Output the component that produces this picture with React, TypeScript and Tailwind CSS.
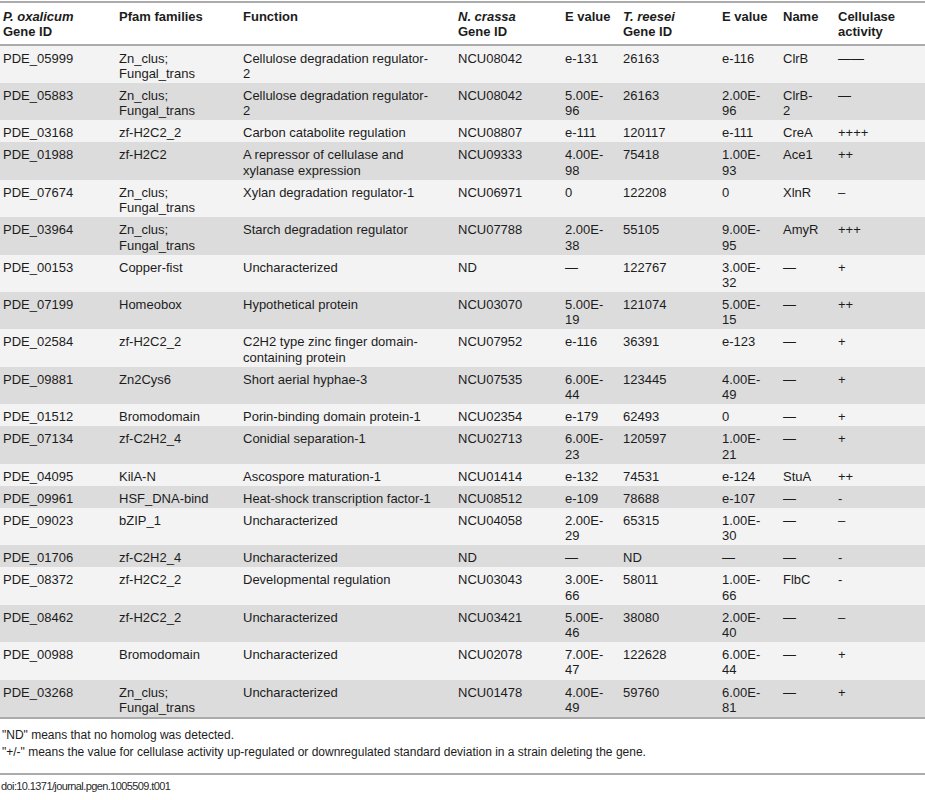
type Row = string[];

const rows: Row[] = [
  ['PDE_05999', 'Zn_clus;\nFungal_trans', 'Cellulose degradation regulator-\n2', 'NCU08042', 'e-131', '26163', 'e-116', 'ClrB', '——'],
  ['PDE_05883', 'Zn_clus;\nFungal_trans', 'Cellulose degradation regulator-\n2', 'NCU08042', '5.00E-\n96', '26163', '2.00E-\n96', 'ClrB-\n2', '—'],
  ['PDE_03168', 'zf-H2C2_2', 'Carbon catabolite regulation', 'NCU08807', 'e-111', '120117', 'e-111', 'CreA', '++++'],
  ['PDE_01988', 'zf-H2C2', 'A repressor of cellulase and\nxylanase expression', 'NCU09333', '4.00E-\n98', '75418', '1.00E-\n93', 'Ace1', '++'],
  ['PDE_07674', 'Zn_clus;\nFungal_trans', 'Xylan degradation regulator-1', 'NCU06971', '0', '122208', '0', 'XlnR', '–'],
  ['PDE_03964', 'Zn_clus;\nFungal_trans', 'Starch degradation regulator', 'NCU07788', '2.00E-\n38', '55105', '9.00E-\n95', 'AmyR', '+++'],
  ['PDE_00153', 'Copper-fist', 'Uncharacterized', 'ND', '—', '122767', '3.00E-\n32', '—', '+'],
  ['PDE_07199', 'Homeobox', 'Hypothetical protein', 'NCU03070', '5.00E-\n19', '121074', '5.00E-\n15', '—', '++'],
  ['PDE_02584', 'zf-H2C2_2', 'C2H2 type zinc finger domain-\ncontaining protein', 'NCU07952', 'e-116', '36391', 'e-123', '—', '+'],
  ['PDE_09881', 'Zn2Cys6', 'Short aerial hyphae-3', 'NCU07535', '6.00E-\n44', '123445', '4.00E-\n49', '—', '+'],
  ['PDE_01512', 'Bromodomain', 'Porin-binding domain protein-1', 'NCU02354', 'e-179', '62493', '0', '—', '+'],
  ['PDE_07134', 'zf-C2H2_4', 'Conidial separation-1', 'NCU02713', '6.00E-\n23', '120597', '1.00E-\n21', '—', '+'],
  ['PDE_04095', 'KilA-N', 'Ascospore maturation-1', 'NCU01414', 'e-132', '74531', 'e-124', 'StuA', '++'],
  ['PDE_09961', 'HSF_DNA-bind', 'Heat-shock transcription factor-1', 'NCU08512', 'e-109', '78688', 'e-107', '—', '-'],
  ['PDE_09023', 'bZIP_1', 'Uncharacterized', 'NCU04058', '2.00E-\n29', '65315', '1.00E-\n30', '—', '–'],
  ['PDE_01706', 'zf-C2H2_4', 'Uncharacterized', 'ND', '—', 'ND', '—', '—', '-'],
  ['PDE_08372', 'zf-H2C2_2', 'Developmental regulation', 'NCU03043', '3.00E-\n66', '58011', '1.00E-\n66', 'FlbC', '-'],
  ['PDE_08462', 'zf-H2C2_2', 'Uncharacterized', 'NCU03421', '5.00E-\n46', '38080', '2.00E-\n40', '—', '–'],
  ['PDE_00988', 'Bromodomain', 'Uncharacterized', 'NCU02078', '7.00E-\n47', '122628', '6.00E-\n44', '—', '+'],
  ['PDE_03268', 'Zn_clus;\nFungal_trans', 'Uncharacterized', 'NCU01478', '4.00E-\n49', '59760', '6.00E-\n81', '—', '+'],
];

const widths = ['w-[116px]', 'w-[124px]', 'w-[215px]', 'w-[107px]', 'w-[58px]', 'w-[99px]', 'w-[61px]', 'w-[55px]', 'w-[90px]'];

const Species = ({ name }: { name: string }) => (
  <>
    <i>{name}</i>
    <br />
    Gene ID
  </>
);

const headers = [
  <Species name="P. oxalicum" />,
  'Pfam families',
  'Function',
  <Species name="N. crassa" />,
  'E value',
  <Species name="T. reesei" />,
  'E value',
  'Name',
  <>Cellulase<br />activity</>,
];

export default function App() {
  return (
    <div className="w-[925px] bg-white pt-[1px] text-[#1c1c1c] font-['Liberation_Sans',Arial,sans-serif]">
      <table className="w-full table-fixed border-collapse text-[13px] leading-[15.3px]">
        <colgroup>
          {widths.map((w, i) => (
            <col key={i} className={w} />
          ))}
        </colgroup>
        <thead>
          <tr className="border-t-2 border-b-2 border-[#ababab]">
            {headers.map((h, i) => (
              <th key={i} className="text-left align-top font-bold pl-[3px] pt-[6px] pb-[4px] whitespace-pre">
                {h}
              </th>
            ))}
          </tr>
        </thead>
        <tbody className="border-b-2 border-[#ababab]">
          {rows.map((r, ri) => (
            <tr key={ri} className={ri % 2 === 0 ? 'bg-[#f3f3f3]' : 'bg-[#dcdcdc]'}>
              {r.map((c, ci) => (
                <td key={ci} className="align-top pl-[3px] pt-[5px] pb-[1.8px] whitespace-pre">
                  {c}
                </td>
              ))}
            </tr>
          ))}
        </tbody>
      </table>

      <div className="pt-[8px] pb-[13px] pl-[2px] text-[12px] leading-[16.6px]">
        <p>"ND" means that no homolog was detected.</p>
        <p>"+/-" means the value for cellulase activity up-regulated or downregulated standard deviation in a strain deleting the gene.</p>
      </div>
      <div className="border-t-2 border-[#ababab] pt-[3px] pl-[1px] text-[11px] tracking-[-0.6px] leading-[16px] text-[#2a2a2a]">
        doi:10.1371/journal.pgen.1005509.t001
      </div>
    </div>
  );
}
